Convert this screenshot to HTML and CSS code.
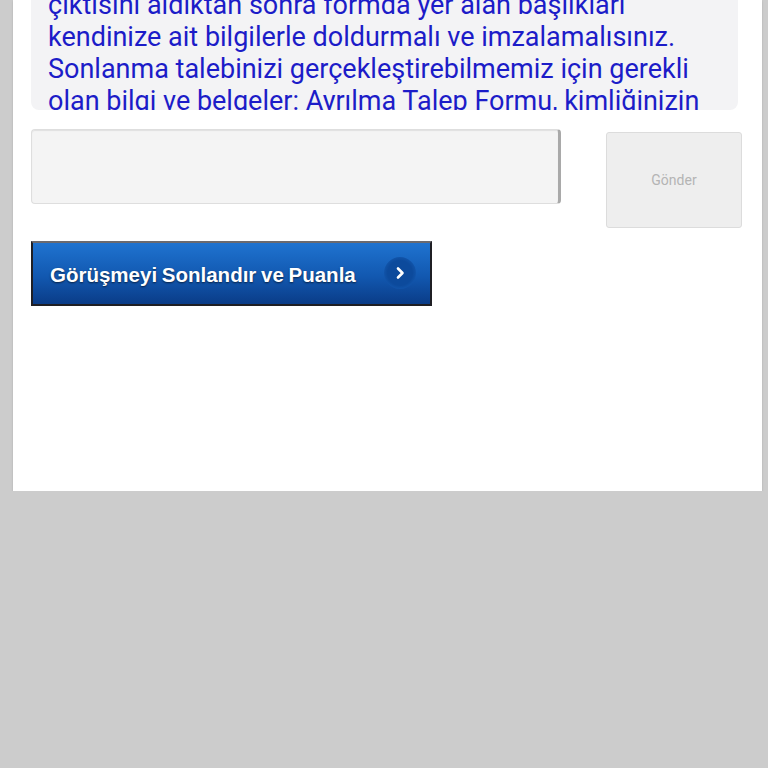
FILE: index.html
```html
<!DOCTYPE html>
<html lang="tr">
<head>
    <meta charset="UTF-8">
    <meta name="viewport" content="width=device-width, initial-scale=1.0">
    <title>Canlı Destek</title>
    <link rel="stylesheet" href="styles.css">
</head>
<body>
    <main class="panel">
        <div class="message-box">
            <p>çıktısını aldıktan sonra formda yer alan başlıkları kendinize ait bilgilerle doldurmalı ve imzalamalısınız. Sonlanma talebinizi gerçekleştirebilmemiz için gerekli olan bilgi ve belgeler: Ayrılma Talep Formu, kimliğinizin fotokopisi ve son faturanızın bir örneğidir.</p>
        </div>

        <form class="chat-form">
            <input type="text" class="chat-input">
            <button type="button" class="send-button">Gönder</button>
        </form>

        <button type="button" class="end-button">
            <span class="end-label">Görüşmeyi Sonlandır ve Puanla</span>
            <span class="end-arrow">
                <svg width="14" height="14" viewBox="0 0 14 14">
                    <path d="M5 2.5 L9.5 7 L5 11.5" fill="none" stroke="#fff" stroke-width="2.6" stroke-linecap="round" stroke-linejoin="round"/>
                </svg>
            </span>
        </button>
    </main>
</body>
</html>
```

FILE: styles.css
```css
body {
    margin: 0;
    background-color: #cccccc;
    font-family: Roboto, "Liberation Sans", sans-serif;
}
.panel {
    margin-left: 13px;
    width: 749px;
    height: 491px;
    background: white;
    box-shadow: 0 1px 2px rgba(0, 0, 0, 0.15);
    overflow: hidden;
}
.message-box {
    margin: -21px 24px 0 18px;
    height: 131px;
    box-sizing: border-box;
    padding: 10px 8px 0 17px;
    background: #f3f3f5;
    border-radius: 0 0 8px 8px;
    overflow: hidden;
}
.message-box p {
    margin: 0;
    color: #1c1cc8;
    font-size: 27px;
    line-height: 32px;
}
.chat-form {
    display: flex;
    align-items: flex-start;
    gap: 45px;
    margin: 19px 0 0 18px;
}
.chat-input {
    width: 530px;
    height: 75px;
    box-sizing: border-box;
    background: #f4f4f4;
    border: 1px solid #dedede;
    border-right: 3px solid #a9a9a9;
    border-radius: 4px;
    box-shadow: inset 0 1px 1px rgba(0, 0, 0, 0.08);
}
.send-button {
    margin-top: 3px;
    width: 136px;
    height: 96px;
    background: #eeeeee;
    border: 1px solid #dcdcdc;
    border-radius: 3px;
    color: #b4b4b4;
    font-family: Roboto, sans-serif;
    font-size: 14px;
}
.end-button {
    display: flex;
    align-items: center;
    justify-content: space-between;
    margin: 13px 0 0 18px;
    width: 401px;
    height: 65px;
    padding: 3px 14px 0 17px;
    background: linear-gradient(#1f73d0, #1258b0 55%, #0a3c87);
    border: 2px solid #1f1f24;
    border-top-color: #6a6a70;
    color: white;
    font-family: "Liberation Sans", Arial, sans-serif;
    font-size: 20.5px;
    font-weight: bold;
    word-spacing: -1px;
    text-shadow: 0 1px 2px rgba(0, 0, 0, 0.6);
    cursor: pointer;
}
.end-arrow {
    display: flex;
    align-items: center;
    justify-content: center;
    margin-top: -5px;
    width: 32px;
    height: 32px;
    border-radius: 50%;
    background: radial-gradient(circle, #0c4a9c 55%, #1a66c2);
}
```
